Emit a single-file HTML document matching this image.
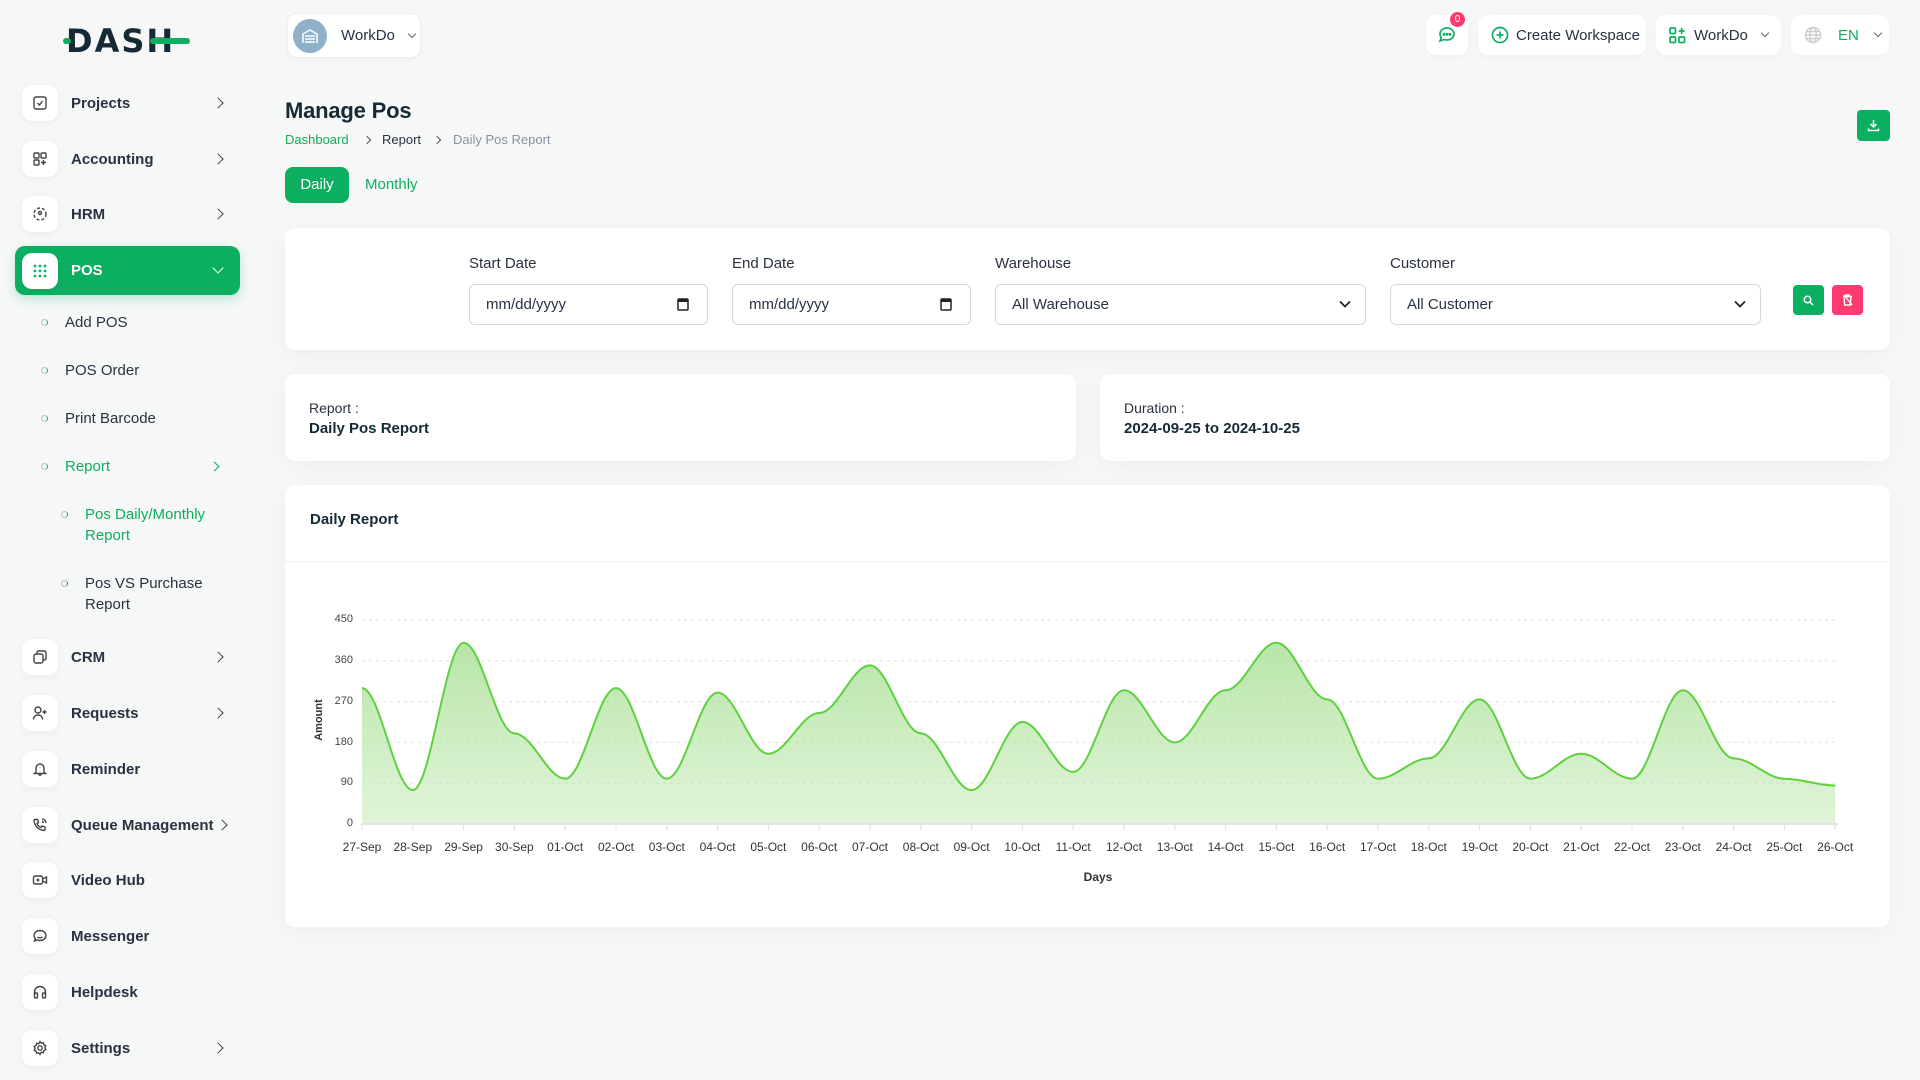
<!DOCTYPE html>
<html><head><meta charset="utf-8">
<style>
*{box-sizing:border-box;margin:0;padding:0}
body{width:1920px;height:1080px;background:#f6f7f7;font-family:"Liberation Sans",sans-serif;color:#293240;position:relative;overflow:hidden}
.abs{position:absolute}
.nav{position:absolute;left:15px;width:225px;height:48px;display:flex;align-items:center;font-size:15px;font-weight:bold;color:#293240}
.ib{width:36px;height:36px;border-radius:10px;background:#fff;box-shadow:0 2px 8px rgba(0,0,0,.05);margin-left:7px;margin-right:13px;display:flex;align-items:center;justify-content:center}
.chev{position:absolute;right:18px;top:20px;width:8px;height:8px;border-right:1.6px solid #444;border-bottom:1.6px solid #444;transform:rotate(-45deg)}
.sub{position:absolute;font-size:15px;color:#293240;line-height:21px}
.dot{position:absolute;width:7px;height:7px;border-radius:50%;border:1.5px solid #b8c0c8;border-right-color:#0caf60}
.card{position:absolute;background:#fff;border-radius:10px;box-shadow:0 4px 20px rgba(0,0,0,.04)}
.pill{position:absolute;background:#fff;border-radius:10px;height:40px;top:15px;display:flex;align-items:center;font-size:15px;color:#293240;box-shadow:0 2px 6px rgba(0,0,0,.03)}
.lbl{position:absolute;top:255px;font-size:15px;color:#293240}
.inp{position:absolute;top:284px;height:41px;border:1px solid #d5d8dc;border-radius:6px;background:#fff;font-size:15px;color:#293240;padding-left:16px;line-height:39px}
.yl{position:absolute;font-size:11px;color:#444;text-align:right;width:30px;left:323px}
.xl{position:absolute;top:840px;font-size:12px;color:#333;width:60px;text-align:center;margin-left:-30px}
</style></head><body>

<div class="abs" style="left:66px;top:26px;font-size:32px;font-weight:900;letter-spacing:2px;color:#162a35;font-family:'DejaVu Sans',sans-serif;line-height:30px">DASH</div>
<div class="abs" style="left:150px;top:38px;width:40px;height:6px;background:#0caf60;border-radius:3px"></div>
<div class="abs" style="left:63px;top:38px;width:8px;height:6px;background:#0caf60;border-radius:3px"></div>

<div class="nav" style="top:79px"><div class="ib"><svg width="16" height="16" viewBox="0 0 16 16" fill="none" stroke="#444" stroke-width="1.4"><rect x="2" y="2" width="12" height="12" rx="2"/><path d="M5.5 8l2 2 3-4"/></svg></div>Projects<span class="chev"></span></div>
<div class="nav" style="top:135px"><div class="ib"><svg width="16" height="16" viewBox="0 0 16 16" fill="none" stroke="#444" stroke-width="1.4"><rect x="2" y="2" width="5" height="5" rx="1"/><rect x="9" y="2" width="5" height="5" rx="1"/><rect x="2" y="9" width="5" height="5" rx="1"/><path d="M11.5 9v5M9 11.5h5"/></svg></div>Accounting<span class="chev"></span></div>
<div class="nav" style="top:190px"><div class="ib"><svg width="16" height="16" viewBox="0 0 16 16" fill="none" stroke="#444" stroke-width="1.4" stroke-dasharray="3 2"><circle cx="8" cy="8" r="6"/><circle cx="8" cy="7" r="1.5" stroke-dasharray="none"/></svg></div>HRM<span class="chev"></span></div>
<div class="nav" style="top:246px;height:49px;background:#0caf60;border-radius:10px;color:#fff;box-shadow:0 4px 10px rgba(12,175,96,.25)"><div class="ib"><svg width="16" height="16" viewBox="0 0 16 16" fill="#0caf60"><circle cx="3" cy="3" r="1.4"/><circle cx="8" cy="3" r="1.4"/><circle cx="13" cy="3" r="1.4"/><circle cx="3" cy="8" r="1.4"/><circle cx="8" cy="8" r="1.4"/><circle cx="13" cy="8" r="1.4"/><circle cx="3" cy="13" r="1.4"/><circle cx="8" cy="13" r="1.4"/><circle cx="13" cy="13" r="1.4"/></svg></div>POS<span class="chev" style="border-color:#fff;transform:rotate(45deg);top:18px"></span></div>

<div class="dot" style="left:41px;top:319px"></div><div class="sub" style="left:65px;top:312px">Add POS</div>
<div class="dot" style="left:41px;top:367px"></div><div class="sub" style="left:65px;top:360px">POS Order</div>
<div class="dot" style="left:41px;top:415px"></div><div class="sub" style="left:65px;top:408px">Print Barcode</div>
<div class="dot" style="left:41px;top:463px"></div><div class="sub" style="left:65px;top:456px;color:#0caf60">Report</div>
<div class="abs" style="left:211px;top:463px;width:7px;height:7px;border-right:1.6px solid #0caf60;border-bottom:1.6px solid #0caf60;transform:rotate(-45deg)"></div>
<div class="dot" style="left:61px;top:511px"></div><div class="sub" style="left:85px;top:504px;color:#0caf60">Pos Daily/Monthly<br>Report</div>
<div class="dot" style="left:61px;top:580px"></div><div class="sub" style="left:85px;top:573px">Pos VS Purchase<br>Report</div>

<div class="nav" style="top:633px"><div class="ib"><svg width="16" height="16" viewBox="0 0 16 16" fill="none" stroke="#444" stroke-width="1.4"><rect x="2" y="5" width="9" height="9" rx="2"/><path d="M5 5V3.5A1.5 1.5 0 016.5 2H12.5A1.5 1.5 0 0114 3.5V9.5A1.5 1.5 0 0112.5 11H11"/></svg></div>CRM<span class="chev"></span></div>
<div class="nav" style="top:689px"><div class="ib"><svg width="16" height="16" viewBox="0 0 16 16" fill="none" stroke="#444" stroke-width="1.4"><circle cx="6" cy="5" r="3"/><path d="M1.5 14.5c0-3 2-4.5 4.5-4.5s4.5 1.5 4.5 4.5M12.5 5v4M10.5 7h4"/></svg></div>Requests<span class="chev"></span></div>
<div class="nav" style="top:745px"><div class="ib"><svg width="16" height="16" viewBox="0 0 16 16" fill="none" stroke="#444" stroke-width="1.4"><path d="M4 11V7a4 4 0 018 0v4l1.5 1.5h-11zM6.5 14h3"/></svg></div>Reminder</div>
<div class="nav" style="top:801px"><div class="ib"><svg width="16" height="16" viewBox="0 0 16 16" fill="none" stroke="#444" stroke-width="1.4"><path d="M3 2.5l2.5 0 1 3-1.5 1a7 7 0 004 4l1-1.5 3 1v2.5a1 1 0 01-1 1A11 11 0 012 3.5a1 1 0 011-1zM10 2a4 4 0 014 4M10 4.5a1.5 1.5 0 011.5 1.5"/></svg></div>Queue Management<span class="chev" style="right:14px"></span></div>
<div class="nav" style="top:856px"><div class="ib"><svg width="16" height="16" viewBox="0 0 16 16" fill="none" stroke="#444" stroke-width="1.4"><rect x="1.5" y="4" width="9" height="8" rx="1.5"/><path d="M10.5 7l4-2v6l-4-2M6 6.5v3M4.5 8h3"/></svg></div>Video Hub</div>
<div class="nav" style="top:912px"><div class="ib"><svg width="16" height="16" viewBox="0 0 16 16" fill="none" stroke="#444" stroke-width="1.4"><path d="M8 2.5c3.3 0 6 2.2 6 5s-2.7 5-6 5c-1 0-2-.2-2.8-.6L2.5 13l.8-2.5C2.5 9.6 2 8.6 2 7.5c0-2.8 2.7-5 6-5zM5.5 9c1.4 1.2 3.6 1.2 5 0"/></svg></div>Messenger</div>
<div class="nav" style="top:968px"><div class="ib"><svg width="16" height="16" viewBox="0 0 16 16" fill="none" stroke="#444" stroke-width="1.4"><path d="M2.5 11V8a5.5 5.5 0 0111 0v3"/><rect x="2.5" y="9" width="3" height="5" rx="1"/><rect x="10.5" y="9" width="3" height="5" rx="1"/></svg></div>Helpdesk</div>
<div class="nav" style="top:1024px"><div class="ib"><svg width="16" height="16" viewBox="0 0 16 16" fill="none" stroke="#444" stroke-width="1.4"><circle cx="8" cy="8" r="2.2"/><path d="M8 1.5l1.3 1.7 2.1-.5.5 2.1 1.9 1-.9 1.9.9 1.9-1.9 1-.5 2.1-2.1-.5L8 14.5l-1.3-1.7-2.1.5-.5-2.1-1.9-1 .9-1.9-.9-1.9 1.9-1 .5-2.1 2.1.5z"/></svg></div>Settings<span class="chev"></span></div>

<div class="pill" style="left:287px;width:134px;height:45px;top:13px;border:1px solid #eceeef">
  <div style="width:34px;height:34px;border-radius:50%;background:#8fb0c9;margin-left:5px;display:flex;align-items:center;justify-content:center"><svg width="18" height="16" viewBox="0 0 18 16" fill="none" stroke="#fff" stroke-width="1.5"><path d="M2 15V6l7-4 7 4v9M4 8h10M4 11h10M4 14h10"/></svg></div>
  <span style="margin-left:14px">WorkDo</span>
  <span style="margin-left:14px;width:6px;height:6px;border-right:1.3px solid #666;border-bottom:1.3px solid #666;transform:rotate(45deg);margin-top:-4px"></span>
</div>
<div class="pill" style="left:1426px;width:42px;justify-content:center"><svg width="20" height="20" viewBox="0 0 20 20" fill="none" stroke="#0caf60" stroke-width="1.7"><path d="M10 3c4 0 7 2.6 7 6s-3 6-7 6c-1 0-2-.2-2.8-.5L3 16l1.2-3.2C3.4 11.7 3 10.4 3 9c0-3.4 3-6 7-6z"/><circle cx="7" cy="9.3" r=".6" fill="#0caf60"/><circle cx="10" cy="9.3" r=".6" fill="#0caf60"/><circle cx="13" cy="9.3" r=".6" fill="#0caf60"/></svg>
<div class="abs" style="left:24px;top:-3px;width:15px;height:15px;border-radius:50%;background:#ff3a6e;color:#fff;font-size:10px;text-align:center;line-height:15px">0</div></div>
<div class="pill" style="left:1478px;width:168px"><svg style="margin-left:13px" width="18" height="18" viewBox="0 0 18 18" fill="none" stroke="#0caf60" stroke-width="1.7"><circle cx="9" cy="9" r="7.5"/><path d="M9 5.5v7M5.5 9h7"/></svg><span style="margin-left:7px">Create Workspace</span></div>
<div class="pill" style="left:1656px;width:125px"><svg style="margin-left:13px" width="17" height="17" viewBox="0 0 17 17" fill="none" stroke="#0caf60" stroke-width="1.7"><rect x="1" y="1" width="5.5" height="5.5" rx="1"/><rect x="1" y="10" width="5.5" height="5.5" rx="1"/><rect x="10" y="10" width="5.5" height="5.5" rx="1"/><path d="M12.7 1v6M9.7 4h6"/></svg><span style="margin-left:8px">WorkDo</span><span style="margin-left:14px;width:6px;height:6px;border-right:1.3px solid #666;border-bottom:1.3px solid #666;transform:rotate(45deg);margin-top:-4px"></span></div>
<div class="pill" style="left:1791px;width:98px"><svg style="margin-left:13px" width="18" height="18" viewBox="0 0 18 18" fill="none" stroke="#ccc" stroke-width="1.4"><circle cx="9" cy="9" r="7.5"/><ellipse cx="9" cy="9" rx="3.2" ry="7.5"/><path d="M1.5 9h15M2.5 5.5h13M2.5 12.5h13"/></svg><span style="margin-left:16px;color:#0caf60">EN</span><span style="margin-left:16px;width:6px;height:6px;border-right:1.3px solid #666;border-bottom:1.3px solid #666;transform:rotate(45deg);margin-top:-4px"></span></div>

<div class="abs" style="left:285px;top:98px;font-size:22px;font-weight:bold;color:#162a35;letter-spacing:-.2px">Manage Pos</div>
<div class="abs" style="left:285px;top:132px;font-size:13px;color:#0caf60">Dashboard</div>
<div class="abs" style="left:364px;top:137px;width:6px;height:6px;border-right:1.2px solid #555;border-bottom:1.2px solid #555;transform:rotate(-45deg)"></div>
<div class="abs" style="left:382px;top:132px;font-size:13px;color:#293240">Report</div>
<div class="abs" style="left:434px;top:137px;width:6px;height:6px;border-right:1.2px solid #555;border-bottom:1.2px solid #555;transform:rotate(-45deg)"></div>
<div class="abs" style="left:453px;top:132px;font-size:13px;color:#8a929b">Daily Pos Report</div>
<div class="abs" style="left:1857px;top:110px;width:33px;height:31px;background:#0caf60;border-radius:4px;display:flex;align-items:center;justify-content:center"><svg width="13" height="13" viewBox="0 0 13 13" fill="none" stroke="#fff" stroke-width="1.5"><path d="M6.5 1v7M3.5 5l3 3 3-3M1.5 9.5v2h10v-2"/></svg></div>
<div class="abs" style="left:285px;top:167px;width:64px;height:36px;background:#0caf60;border-radius:8px;color:#fff;font-size:15px;text-align:center;line-height:36px">Daily</div>
<div class="abs" style="left:365px;top:176px;font-size:15px;color:#0caf60">Monthly</div>

<div class="card" style="left:285px;top:228px;width:1605px;height:122px"></div>
<div class="lbl" style="left:469px">Start Date</div>
<div class="lbl" style="left:732px">End Date</div>
<div class="lbl" style="left:995px">Warehouse</div>
<div class="lbl" style="left:1390px">Customer</div>
<div class="inp" style="left:469px;width:239px">mm/dd/yyyy<svg class="abs" style="right:18px;top:12px" width="12" height="14" viewBox="0 0 12 14"><rect x="1" y="2" width="10" height="11" rx="1" fill="none" stroke="#222" stroke-width="1.5"/><rect x="1" y="2" width="10" height="3" fill="#222"/></svg></div>
<div class="inp" style="left:732px;width:239px">mm/dd/yyyy<svg class="abs" style="right:18px;top:12px" width="12" height="14" viewBox="0 0 12 14"><rect x="1" y="2" width="10" height="11" rx="1" fill="none" stroke="#222" stroke-width="1.5"/><rect x="1" y="2" width="10" height="3" fill="#222"/></svg></div>
<div class="inp" style="left:995px;width:371px">All Warehouse<svg class="abs" style="right:14px;top:15px" width="12" height="8" viewBox="0 0 12 8" fill="none" stroke="#222" stroke-width="1.8"><path d="M1 1.5l5 5 5-5"/></svg></div>
<div class="inp" style="left:1390px;width:371px">All Customer<svg class="abs" style="right:14px;top:15px" width="12" height="8" viewBox="0 0 12 8" fill="none" stroke="#222" stroke-width="1.8"><path d="M1 1.5l5 5 5-5"/></svg></div>
<div class="abs" style="left:1793px;top:285px;width:31px;height:30px;background:#0caf60;border-radius:4px;display:flex;align-items:center;justify-content:center"><svg width="11" height="11" viewBox="0 0 11 11" fill="none" stroke="#fff" stroke-width="1.5"><circle cx="4.5" cy="4.5" r="3.3"/><path d="M7 7l3 3"/></svg></div>
<div class="abs" style="left:1832px;top:285px;width:31px;height:30px;background:#ff3a6e;border-radius:4px;display:flex;align-items:center;justify-content:center"><svg width="11" height="12" viewBox="0 0 11 12" fill="none" stroke="#fff" stroke-width="1.4"><path d="M1 2.5h9M4 2.5V1h3v1.5M2 2.5l.7 8.5h5.6l.7-8.5M2 1l8 10"/></svg></div>

<div class="card" style="left:285px;top:374px;width:791px;height:87px"></div>
<div class="abs" style="left:309px;top:400px;font-size:14px;color:#293240">Report :</div>
<div class="abs" style="left:309px;top:420px;font-size:15px;font-weight:bold;color:#162a35">Daily Pos Report</div>
<div class="card" style="left:1100px;top:374px;width:790px;height:87px"></div>
<div class="abs" style="left:1124px;top:400px;font-size:14px;color:#293240">Duration :</div>
<div class="abs" style="left:1124px;top:420px;font-size:15px;font-weight:bold;color:#162a35">2024-09-25 to 2024-10-25</div>

<div class="card" style="left:285px;top:485px;width:1605px;height:442px"></div>
<div class="abs" style="left:310px;top:511px;font-size:15px;font-weight:bold;color:#162a35">Daily Report</div>
<div class="abs" style="left:285px;top:561px;width:1605px;height:1px;background:#eef0f1"></div>

<svg class="abs" style="left:0;top:0" width="1920" height="1080">
<defs><linearGradient id="g" x1="0" y1="0" x2="0" y2="1"><stop offset="0" stop-color="#9fdc8a" stop-opacity=".75"/><stop offset="1" stop-color="#b9e6a8" stop-opacity=".45"/></linearGradient></defs>
<g stroke="#e4e4e4" stroke-dasharray="3 4" stroke-width="1.2">
<line x1="362" x2="1838" y1="620" y2="620"/><line x1="362" x2="1838" y1="660.8" y2="660.8"/><line x1="362" x2="1838" y1="701.6" y2="701.6"/><line x1="362" x2="1838" y1="742.4" y2="742.4"/><line x1="362" x2="1838" y1="783.2" y2="783.2"/>
</g>
<g transform="translate(0,152.3) scale(1,0.7434)">
<path fill="url(#g)" d="M362,720.7 C380,720.7 394.8,857.9 412.8,857.9 C430.8,857.9 445.6,659.7 463.6,659.7 C481.6,659.7 496.4,781.6 514.4,781.6 C532.4,781.6 547.2,842.6 565.2,842.6 C583.2,842.6 598,720.7 616,720.7 C634,720.7 648.8,842.6 666.8,842.6 C684.8,842.6 699.6,726.8 717.6,726.8 C735.6,726.8 750.4,809.1 768.4,809.1 C786.4,809.1 801.2,754.2 819.2,754.2 C837.2,754.2 852,690.2 870,690.2 C888,690.2 902.8,781.6 920.8,781.6 C938.8,781.6 953.6,857.9 971.6,857.9 C989.6,857.9 1004.4,766.4 1022.4,766.4 C1040.4,766.4 1055.2,833.5 1073.2,833.5 C1091.2,833.5 1106,723.7 1124,723.7 C1142,723.7 1156.8,793.8 1174.8,793.8 C1192.8,793.8 1207.6,723.7 1225.6,723.7 C1243.6,723.7 1258.4,659.7 1276.4,659.7 C1294.4,659.7 1309.2,735.9 1327.2,735.9 C1345.2,735.9 1360,842.6 1378,842.6 C1396,842.6 1410.8,815.2 1428.8,815.2 C1446.8,815.2 1461.6,735.9 1479.6,735.9 C1497.6,735.9 1512.4,842.6 1530.4,842.6 C1548.4,842.6 1563.2,809.1 1581.2,809.1 C1599.2,809.1 1614,842.6 1632,842.6 C1650,842.6 1664.8,723.7 1682.8,723.7 C1700.8,723.7 1715.6,815.2 1733.6,815.2 C1751.6,815.2 1766.4,842.6 1784.4,842.6 C1802.4,842.6 1817.2,851.8 1835.2,851.8 L1835.2,903.6 L362,903.6 Z"/>
<path fill="none" stroke="#5ed13e" stroke-width="2" vector-effect="non-scaling-stroke" d="M362,720.7 C380,720.7 394.8,857.9 412.8,857.9 C430.8,857.9 445.6,659.7 463.6,659.7 C481.6,659.7 496.4,781.6 514.4,781.6 C532.4,781.6 547.2,842.6 565.2,842.6 C583.2,842.6 598,720.7 616,720.7 C634,720.7 648.8,842.6 666.8,842.6 C684.8,842.6 699.6,726.8 717.6,726.8 C735.6,726.8 750.4,809.1 768.4,809.1 C786.4,809.1 801.2,754.2 819.2,754.2 C837.2,754.2 852,690.2 870,690.2 C888,690.2 902.8,781.6 920.8,781.6 C938.8,781.6 953.6,857.9 971.6,857.9 C989.6,857.9 1004.4,766.4 1022.4,766.4 C1040.4,766.4 1055.2,833.5 1073.2,833.5 C1091.2,833.5 1106,723.7 1124,723.7 C1142,723.7 1156.8,793.8 1174.8,793.8 C1192.8,793.8 1207.6,723.7 1225.6,723.7 C1243.6,723.7 1258.4,659.7 1276.4,659.7 C1294.4,659.7 1309.2,735.9 1327.2,735.9 C1345.2,735.9 1360,842.6 1378,842.6 C1396,842.6 1410.8,815.2 1428.8,815.2 C1446.8,815.2 1461.6,735.9 1479.6,735.9 C1497.6,735.9 1512.4,842.6 1530.4,842.6 C1548.4,842.6 1563.2,809.1 1581.2,809.1 C1599.2,809.1 1614,842.6 1632,842.6 C1650,842.6 1664.8,723.7 1682.8,723.7 C1700.8,723.7 1715.6,815.2 1733.6,815.2 C1751.6,815.2 1766.4,842.6 1784.4,842.6 C1802.4,842.6 1817.2,851.8 1835.2,851.8"/>
</g>
<line x1="362" x2="1838" y1="824" y2="824" stroke="#ddd" stroke-width="1.5"/>
<g stroke="#ddd" stroke-width="1"><path d="M362 824v6M412.8 824v6M463.6 824v6M514.4 824v6M565.2 824v6M616 824v6M666.8 824v6M717.6 824v6M768.4 824v6M819.2 824v6M870 824v6M920.8 824v6M971.6 824v6M1022.4 824v6M1073.2 824v6M1124 824v6M1174.8 824v6M1225.6 824v6M1276.4 824v6M1327.2 824v6M1378 824v6M1428.8 824v6M1479.6 824v6M1530.4 824v6M1581.2 824v6M1632 824v6M1682.8 824v6M1733.6 824v6M1784.4 824v6M1835.2 824v6"/></g>
<text x="322" y="720" transform="rotate(-90 322 720)" text-anchor="middle" font-family="Liberation Sans" font-size="11" font-weight="bold" fill="#333">Amount</text>
<text x="1098" y="881" text-anchor="middle" font-family="Liberation Sans" font-size="12" font-weight="bold" fill="#333">Days</text>
</svg>

<div class="yl" style="top:613px">450</div><div class="yl" style="top:654px">360</div><div class="yl" style="top:695px">270</div><div class="yl" style="top:736px">180</div><div class="yl" style="top:776px">90</div><div class="yl" style="top:817px">0</div>

<div class="xl" style="left:362px">27-Sep</div><div class="xl" style="left:412.8px">28-Sep</div><div class="xl" style="left:463.6px">29-Sep</div><div class="xl" style="left:514.4px">30-Sep</div><div class="xl" style="left:565.2px">01-Oct</div><div class="xl" style="left:616px">02-Oct</div><div class="xl" style="left:666.8px">03-Oct</div><div class="xl" style="left:717.6px">04-Oct</div><div class="xl" style="left:768.4px">05-Oct</div><div class="xl" style="left:819.2px">06-Oct</div><div class="xl" style="left:870px">07-Oct</div><div class="xl" style="left:920.8px">08-Oct</div><div class="xl" style="left:971.6px">09-Oct</div><div class="xl" style="left:1022.4px">10-Oct</div><div class="xl" style="left:1073.2px">11-Oct</div><div class="xl" style="left:1124px">12-Oct</div><div class="xl" style="left:1174.8px">13-Oct</div><div class="xl" style="left:1225.6px">14-Oct</div><div class="xl" style="left:1276.4px">15-Oct</div><div class="xl" style="left:1327.2px">16-Oct</div><div class="xl" style="left:1378px">17-Oct</div><div class="xl" style="left:1428.8px">18-Oct</div><div class="xl" style="left:1479.6px">19-Oct</div><div class="xl" style="left:1530.4px">20-Oct</div><div class="xl" style="left:1581.2px">21-Oct</div><div class="xl" style="left:1632px">22-Oct</div><div class="xl" style="left:1682.8px">23-Oct</div><div class="xl" style="left:1733.6px">24-Oct</div><div class="xl" style="left:1784.4px">25-Oct</div><div class="xl" style="left:1835.2px">26-Oct</div>

</body></html>
